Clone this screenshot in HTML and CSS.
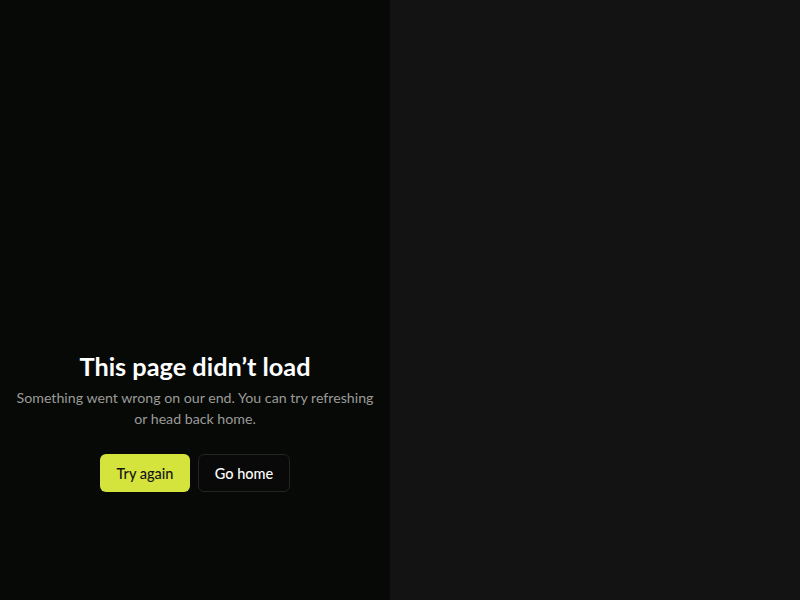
FILE: index.html
```html
<!DOCTYPE html>
<html lang="en">
<head>
  <meta charset="UTF-8">
  <meta name="viewport" content="width=device-width, initial-scale=1.0">
  <title>This page didn't load</title>
  <link rel="stylesheet" href="styles.css">
</head>
<body>

  <div class="layout">
    <main class="panel">
      <div class="error">
        <h1>This page didn’t load</h1>
        <p>Something went wrong on our end. You can try refreshing or head back home.</p>
        <div class="actions">
          <button class="btn btn-primary" type="button">Try again</button>
          <button class="btn btn-ghost" type="button">Go home</button>
        </div>
      </div>
    </main>
    <aside class="side"></aside>
  </div>

</body>
</html>
```

FILE: styles.css
```css
html {
  font-size: 16px;
}

body {
  font-family: 'Lato', 'Noto Sans', Arial, sans-serif;
  background-color: #131313;
  color: #f4f4f4;
  margin: 0;
}

.layout {
  display: flex;
  height: 100vh;
}

.panel {
  width: 390px;
  background-color: #070907;
  display: flex;
  justify-content: center;
}

.side {
  flex: 1;
  background-color: #131313;
}

.error {
  padding-top: 350px;
  text-align: center;
  width: 370px;
}

h1 {
  margin: 0;
  font-size: 25.3px;
  font-weight: 700;
  line-height: 32px;
  color: #ffffff;
}

p {
  margin: 5px 0 0;
  font-size: 14.2px;
  line-height: 21px;
  color: #9a9b98;
}

.actions {
  display: flex;
  justify-content: center;
  gap: 8px;
  margin-top: 25px;
}

.btn {
  font-family: inherit;
  font-size: 14.5px;
  font-weight: 500;
  height: 38px;
  border-radius: 6px;
  cursor: pointer;
}

.btn-primary {
  width: 90px;
  background-color: #d4e43c;
  color: #141414;
  border: none;
}

.btn-ghost {
  width: 92px;
  background-color: #080908;
  color: #ffffff;
  border: 1px solid #242424;
}
```
